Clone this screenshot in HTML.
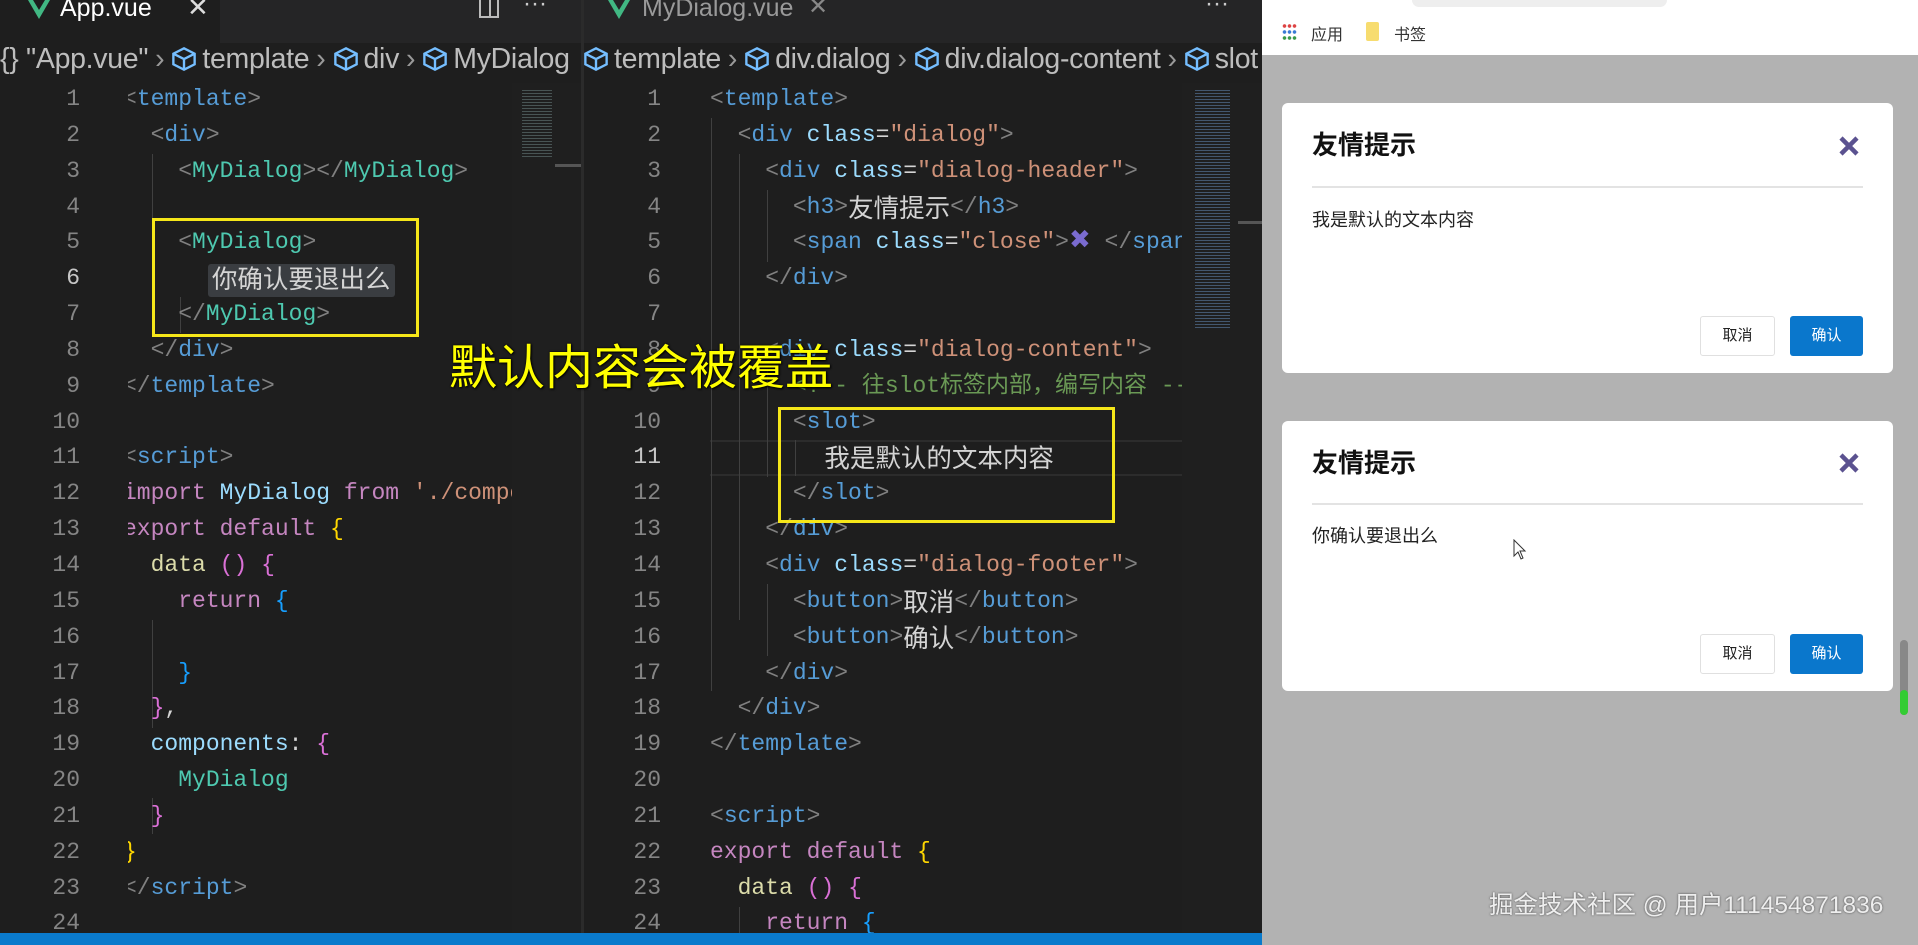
<!DOCTYPE html>
<html><head><meta charset="utf-8">
<style>
*{margin:0;padding:0;box-sizing:border-box}
body{width:1918px;height:945px;overflow:hidden;background:#1e1e1e;position:relative;font-family:"Liberation Sans","Noto Sans CJK SC",sans-serif}
.abs{position:absolute}
.mono{font-family:"Liberation Mono","Noto Sans CJK SC",monospace;font-size:23px;white-space:normal;line-height:35.85px}
.mono>div{white-space:pre;height:35.85px;overflow:visible}
.zh{font-family:"Noto Sans CJK SC",sans-serif;font-size:25.5px;line-height:33px;display:inline-block;vertical-align:top;margin-top:0}
.ln{color:#858585;text-align:right;width:60px}
.g{color:#808080}.t{color:#569cd6}.c{color:#4ec9b0}.a{color:#9cdcfe}.s{color:#ce9178}.k{color:#c586c0}.f{color:#dcdcaa}.y{color:#ffd700}.p{color:#da70d6}.b{color:#179fff}.w{color:#d4d4d4}.cm{color:#6a9955}
.crumb{font-size:28.5px;color:#bdbdbd;white-space:nowrap;top:44px;letter-spacing:-0.3px}
.cube{display:inline-block;width:26px;height:26px;vertical-align:-4px;margin-right:5px}
.sep{color:#999;margin:0 7px}
.guide{position:absolute;width:1px;background:#404040}
</style></head><body>

<!-- tab bar -->
<div class="abs" style="left:0;top:0;width:1262px;height:43px;background:#252526"></div>
<div class="abs" style="left:0;top:0;width:220px;height:43px;background:#1e1e1e"></div>
<svg class="abs" style="left:28px;top:0" width="22" height="22" viewBox="0 0 22 22"><path d="M0 0 L11 19 L22 0 L17 0 L11 10 L5 0Z" fill="#41b883"/></svg>
<div class="abs" style="left:60px;top:-6px;font-size:25px;color:#fff">App.vue</div>
<div class="abs" style="left:187px;top:-8px;font-size:26px;color:#ddd">✕</div>
<div class="abs" style="left:479px;top:0;width:20px;height:18px;border:2px solid #bbb;border-top:none"></div>
<div class="abs" style="left:489px;top:0;width:2px;height:18px;background:#bbb"></div>
<div class="abs" style="left:523px;top:-10px;font-size:24px;color:#ccc">···</div>
<svg class="abs" style="left:608px;top:0" width="22" height="22" viewBox="0 0 22 22"><path d="M0 0 L11 19 L22 0 L17 0 L11 10 L5 0Z" fill="#41b883"/></svg>
<div class="abs" style="left:642px;top:-6px;font-size:25px;color:#9a9a9a">MyDialog.vue</div>
<div class="abs" style="left:808px;top:-8px;font-size:24px;color:#888">✕</div>
<div class="abs" style="left:1205px;top:-10px;font-size:24px;color:#ccc">···</div>

<!-- breadcrumbs -->
<div class="abs" style="left:0;top:43px;width:582px;height:40px;overflow:hidden"><div class="abs crumb" style="left:0;top:0">{} "App.vue"<span class="sep">›</span><svg class="cube" viewBox="0 0 22 22"><path d="M11 2 L20 6.5 V15.5 L11 20 L2 15.5 V6.5Z M2 6.5 L11 11 L20 6.5 M11 11 V20" fill="none" stroke="#75beff" stroke-width="2"/></svg>template<span class="sep">›</span><svg class="cube" viewBox="0 0 22 22"><path d="M11 2 L20 6.5 V15.5 L11 20 L2 15.5 V6.5Z M2 6.5 L11 11 L20 6.5 M11 11 V20" fill="none" stroke="#75beff" stroke-width="2"/></svg>div<span class="sep">›</span><svg class="cube" viewBox="0 0 22 22"><path d="M11 2 L20 6.5 V15.5 L11 20 L2 15.5 V6.5Z M2 6.5 L11 11 L20 6.5 M11 11 V20" fill="none" stroke="#75beff" stroke-width="2"/></svg>MyDialog</div></div>
<div class="abs" style="left:582px;top:43px;width:680px;height:40px;overflow:hidden;background:#1e1e1e"><div class="abs crumb" style="left:1px;top:0"><svg class="cube" viewBox="0 0 22 22"><path d="M11 2 L20 6.5 V15.5 L11 20 L2 15.5 V6.5Z M2 6.5 L11 11 L20 6.5 M11 11 V20" fill="none" stroke="#75beff" stroke-width="2"/></svg>template<span class="sep">›</span><svg class="cube" viewBox="0 0 22 22"><path d="M11 2 L20 6.5 V15.5 L11 20 L2 15.5 V6.5Z M2 6.5 L11 11 L20 6.5 M11 11 V20" fill="none" stroke="#75beff" stroke-width="2"/></svg>div.dialog<span class="sep">›</span><svg class="cube" viewBox="0 0 22 22"><path d="M11 2 L20 6.5 V15.5 L11 20 L2 15.5 V6.5Z M2 6.5 L11 11 L20 6.5 M11 11 V20" fill="none" stroke="#75beff" stroke-width="2"/></svg>div.dialog-content<span class="sep">›</span><svg class="cube" viewBox="0 0 22 22"><path d="M11 2 L20 6.5 V15.5 L11 20 L2 15.5 V6.5Z M2 6.5 L11 11 L20 6.5 M11 11 V20" fill="none" stroke="#75beff" stroke-width="2"/></svg>slot</div></div>

<!-- left editor -->
<div class="abs mono ln" style="left:20px;top:82px"><div>1</div><div>2</div><div>3</div><div>4</div><div>5</div><div style="color:#c6c6c6">6</div><div>7</div><div>8</div><div>9</div><div>10</div><div>11</div><div>12</div><div>13</div><div>14</div><div>15</div><div>16</div><div>17</div><div>18</div><div>19</div><div>20</div><div>21</div><div>22</div><div>23</div><div>24</div></div>
<div class="abs" style="left:128px;top:82px;width:384px;height:851px;overflow:hidden">
<div class="guide" style="left:24px;top:72px;height:143px"></div>
<div class="guide" style="left:52px;top:215px;height:36px"></div>
<div class="guide" style="left:24px;top:538px;height:108px"></div>
<div class="guide" style="left:24px;top:716px;height:36px"></div>
<div class="abs" style="left:80px;top:182px;width:187px;height:33px;background:#3a3d41;border-radius:3px"></div>
<div class="abs mono" style="left:-5px;top:0"><div><span class="g">&lt;</span><span class="t">template</span><span class="g">&gt;</span></div><div>  <span class="g">&lt;</span><span class="t">div</span><span class="g">&gt;</span></div><div>    <span class="g">&lt;</span><span class="c">MyDialog</span><span class="g">&gt;&lt;/</span><span class="c">MyDialog</span><span class="g">&gt;</span></div><div> </div><div>    <span class="g">&lt;</span><span class="c">MyDialog</span><span class="g">&gt;</span></div><div class="w">      <span class="zh" style="margin-left:6px">你确认要退出么</span></div><div>    <span class="g">&lt;/</span><span class="c">MyDialog</span><span class="g">&gt;</span></div><div>  <span class="g">&lt;/</span><span class="t">div</span><span class="g">&gt;</span></div><div><span class="g">&lt;/</span><span class="t">template</span><span class="g">&gt;</span></div><div> </div><div><span class="g">&lt;</span><span class="t">script</span><span class="g">&gt;</span></div><div><span class="k">import</span> <span class="a">MyDialog</span> <span class="k">from</span> <span class="s">'./components/MyDialog.vue'</span></div><div><span class="k">export default</span> <span class="y">{</span></div><div>  <span class="f">data</span> <span class="p">()</span> <span class="p">{</span></div><div>    <span class="k">return</span> <span class="b">{</span></div><div> </div><div>    <span class="b">}</span></div><div>  <span class="p">}</span><span class="w">,</span></div><div>  <span class="a">components</span><span class="w">:</span> <span class="p">{</span></div><div>    <span class="c">MyDialog</span></div><div>  <span class="p">}</span></div><div><span class="y">}</span></div><div><span class="g">&lt;/</span><span class="t">script</span><span class="g">&gt;</span></div></div></div>
<!-- left minimap -->
<div class="abs" style="left:512px;top:83px;width:70px;height:850px;background:#1f1f1f"></div>
<div class="abs" style="left:522px;top:88px;width:30px;height:70px;background:repeating-linear-gradient(#1f1f1f 0 2px,#5a6a6a 2px 3px);opacity:.7"></div>
<div class="abs" style="left:555px;top:164px;width:27px;height:3px;background:#555"></div>
<div class="abs" style="left:581px;top:0;width:3px;height:933px;background:#2b2b2b"></div>

<!-- right editor -->
<div class="abs mono ln" style="left:601px;top:82px"><div>1</div><div>2</div><div>3</div><div>4</div><div>5</div><div>6</div><div>7</div><div>8</div><div>9</div><div>10</div><div style="color:#c6c6c6">11</div><div>12</div><div>13</div><div>14</div><div>15</div><div>16</div><div>17</div><div>18</div><div>19</div><div>20</div><div>21</div><div>22</div><div>23</div><div>24</div></div>
<div class="abs" style="left:710px;top:82px;width:472px;height:851px;overflow:hidden">
<div class="abs" style="left:0;top:358px;width:472px;height:36px;border-top:2px solid #2c2c2c;border-bottom:2px solid #2c2c2c"></div>
<div class="guide" style="left:1px;top:36px;height:573px"></div>
<div class="guide" style="left:29px;top:72px;height:466px"></div>
<div class="guide" style="left:57px;top:108px;height:72px"></div>
<div class="guide" style="left:57px;top:287px;height:108px"></div>
<div class="guide" style="left:85px;top:358px;height:36px"></div>
<div class="guide" style="left:57px;top:502px;height:72px"></div>
<div class="guide" style="left:29px;top:825px;height:36px"></div>
<div class="abs mono" style="left:0;top:0"><div><span class="g">&lt;</span><span class="t">template</span><span class="g">&gt;</span></div><div>  <span class="g">&lt;</span><span class="t">div</span> <span class="a">class</span><span class="w">=</span><span class="s">"dialog"</span><span class="g">&gt;</span></div><div>    <span class="g">&lt;</span><span class="t">div</span> <span class="a">class</span><span class="w">=</span><span class="s">"dialog-header"</span><span class="g">&gt;</span></div><div>      <span class="g">&lt;</span><span class="t">h3</span><span class="g">&gt;</span><span class="w zh">友情提示</span><span class="g">&lt;/</span><span class="t">h3</span><span class="g">&gt;</span></div><div>      <span class="g">&lt;</span><span class="t">span</span> <span class="a">class</span><span class="w">=</span><span class="s">"close"</span><span class="g">&gt;</span><span style="color:#7a6bd0;font-weight:bold;font-size:26px;line-height:30px;font-family:'DejaVu Sans',sans-serif">✖</span> <span class="g">&lt;/</span><span class="t">span</span><span class="g">&gt;</span></div><div>    <span class="g">&lt;/</span><span class="t">div</span><span class="g">&gt;</span></div><div> </div><div>    <span class="g">&lt;</span><span class="t">div</span> <span class="a">class</span><span class="w">=</span><span class="s">"dialog-content"</span><span class="g">&gt;</span></div><div>      <span class="cm">&lt;!-- 往slot标签内部，编写内容 --&gt;</span></div><div>      <span class="g">&lt;</span><span class="t">slot</span><span class="g">&gt;</span></div><div class="w">        <span class="zh" style="margin-left:4px">我是默认的文本内容</span></div><div>      <span class="g">&lt;/</span><span class="t">slot</span><span class="g">&gt;</span></div><div>    <span class="g">&lt;/</span><span class="t">div</span><span class="g">&gt;</span></div><div>    <span class="g">&lt;</span><span class="t">div</span> <span class="a">class</span><span class="w">=</span><span class="s">"dialog-footer"</span><span class="g">&gt;</span></div><div>      <span class="g">&lt;</span><span class="t">button</span><span class="g">&gt;</span><span class="w zh">取消</span><span class="g">&lt;/</span><span class="t">button</span><span class="g">&gt;</span></div><div>      <span class="g">&lt;</span><span class="t">button</span><span class="g">&gt;</span><span class="w zh">确认</span><span class="g">&lt;/</span><span class="t">button</span><span class="g">&gt;</span></div><div>    <span class="g">&lt;/</span><span class="t">div</span><span class="g">&gt;</span></div><div>  <span class="g">&lt;/</span><span class="t">div</span><span class="g">&gt;</span></div><div><span class="g">&lt;/</span><span class="t">template</span><span class="g">&gt;</span></div><div> </div><div><span class="g">&lt;</span><span class="t">script</span><span class="g">&gt;</span></div><div><span class="k">export default</span> <span class="y">{</span></div><div>  <span class="f">data</span> <span class="p">()</span> <span class="p">{</span></div><div>    <span class="k">return</span> <span class="b">{</span></div></div></div>
<!-- right minimap -->
<div class="abs" style="left:1182px;top:83px;width:80px;height:850px;background:#1f1f1f"></div>
<div class="abs" style="left:1195px;top:88px;width:35px;height:240px;background:repeating-linear-gradient(#1f1f1f 0 2px,#4f6a8a 2px 3px);opacity:.75"></div>
<div class="abs" style="left:1238px;top:221px;width:24px;height:3px;background:#555"></div>

<!-- yellow boxes -->
<div class="abs" style="left:152px;top:218px;width:267px;height:119px;border:3px solid #f5e619"></div>
<div class="abs" style="left:778px;top:407px;width:337px;height:116px;border:3px solid #f5e619"></div>

<!-- caption -->
<div class="abs" style="left:449px;top:334px;font-size:48px;color:#ffff00;font-family:'Noto Sans CJK SC',sans-serif;text-shadow:0 0 2px #000,1px 1px 2px #000;white-space:nowrap;line-height:58px">默认内容会被覆盖</div>

<!-- status bar -->
<div class="abs" style="left:0;top:933px;width:1262px;height:12px;background:#0a7acc"></div>

<!-- browser -->
<div class="abs" style="left:1262px;top:0;width:656px;height:945px;background:#b2b2b2"></div>
<div class="abs" style="left:1262px;top:0;width:656px;height:55px;background:#fff"></div>
<div class="abs" style="left:1412px;top:0;width:255px;height:7px;background:#eee;border-radius:0 0 8px 8px"></div>
<div class="abs" style="left:1282px;top:23px;width:15px;height:6px;background:radial-gradient(circle,#d44 1.6px,transparent 2px) 0 0/5px 6px"></div>
<div class="abs" style="left:1282px;top:29px;width:15px;height:6px;background:radial-gradient(circle,#3a7bd5 1.6px,transparent 2px) 0 0/5px 6px"></div>
<div class="abs" style="left:1282px;top:35px;width:15px;height:6px;background:radial-gradient(circle,#3a9a4a 1.6px,transparent 2px) 0 0/5px 6px"></div>
<div class="abs" style="left:1311px;top:21px;font-size:16px;color:#333">应用</div>
<div class="abs" style="left:1366px;top:22px;width:13px;height:19px;background:#f7dc6f;border-radius:2px"></div>
<div class="abs" style="left:1394px;top:21px;font-size:16px;color:#333">书签</div>

<div class="abs" style="left:1282px;top:103px;width:611px;height:270px;background:#fff;border-radius:6px"></div>
<div class="abs" style="left:1312px;top:128px;font-size:26px;font-weight:bold;color:#111;font-family:'Noto Sans CJK SC',sans-serif;line-height:32px">友情提示</div>
<svg class="abs" style="left:1838px;top:135px" width="22" height="22" viewBox="0 0 22 22"><path d="M3 3 L19 19 M19 3 L3 19" stroke="#5b5290" stroke-width="4.5"/></svg>
<div class="abs" style="left:1312px;top:186px;width:551px;height:2px;background:#e3e3e3"></div>
<div class="abs" style="left:1312px;top:208px;font-size:18px;color:#222;line-height:24px">我是默认的文本内容</div>
<div class="abs" style="left:1700px;top:316px;width:75px;height:40px;border:1px solid #e0e0e0;border-radius:3px;font-size:15px;color:#222;text-align:center;line-height:38px">取消</div>
<div class="abs" style="left:1790px;top:316px;width:73px;height:40px;background:#0a77cc;border-radius:3px;font-size:15px;color:#fff;text-align:center;line-height:40px">确认</div>

<div class="abs" style="left:1282px;top:421px;width:611px;height:270px;background:#fff;border-radius:6px"></div>
<div class="abs" style="left:1312px;top:446px;font-size:26px;font-weight:bold;color:#111;font-family:'Noto Sans CJK SC',sans-serif;line-height:32px">友情提示</div>
<svg class="abs" style="left:1838px;top:452px" width="22" height="22" viewBox="0 0 22 22"><path d="M3 3 L19 19 M19 3 L3 19" stroke="#5b5290" stroke-width="4.5"/></svg>
<div class="abs" style="left:1312px;top:503px;width:551px;height:2px;background:#e3e3e3"></div>
<div class="abs" style="left:1312px;top:524px;font-size:18px;color:#222;line-height:24px">你确认要退出么</div>
<svg class="abs" style="left:1513px;top:539px" width="14" height="22" viewBox="0 0 14 22"><path d="M1 1 V17 L5 13 L8 20 L10 19 L7 12 L12 12Z" fill="#fff" stroke="#333" stroke-width="1"/></svg>
<div class="abs" style="left:1700px;top:634px;width:75px;height:40px;border:1px solid #e0e0e0;border-radius:3px;font-size:15px;color:#222;text-align:center;line-height:38px">取消</div>
<div class="abs" style="left:1790px;top:634px;width:73px;height:40px;background:#0a77cc;border-radius:3px;font-size:15px;color:#fff;text-align:center;line-height:40px">确认</div>

<div class="abs" style="left:1900px;top:640px;width:8px;height:75px;background:#888;border-radius:4px"></div>
<div class="abs" style="left:1900px;top:690px;width:8px;height:25px;background:#3c3;border-radius:4px"></div>

<div class="abs" style="left:1489px;top:891px;font-size:24.5px;color:#eee;text-shadow:0 0 2px #444;white-space:nowrap;line-height:30px">掘金技术社区 @ 用户111454871836</div>
</body></html>
